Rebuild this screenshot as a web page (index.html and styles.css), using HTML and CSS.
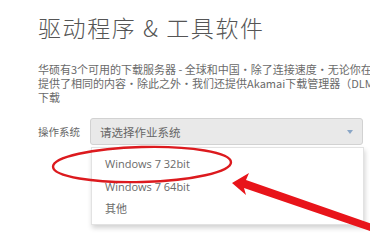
FILE: index.html
```html
<!DOCTYPE html>
<html lang="zh">
<head>
<meta charset="utf-8">
<link rel="stylesheet" href="styles.css">
</head>
<body>
<div class="page">
  <h1 class="title">驱动程序 &amp; 工具软件</h1>
  <div class="intro">
    <div class="line">华硕有3个可用的下载服务器 - 全球和中国・除了连接速度・无论你在哪个服务器下载・都</div>
    <div class="line">提供了相同的内容・除此之外・我们还提供Akamai下载管理器（DLM）以提高下载速度</div>
    <div class="line">下载</div>
  </div>
  <div class="row">
    <span class="label">操作系统</span>
    <div class="select">
      <span class="select-text">请选择作业系统</span>
      <span class="caret"></span>
    </div>
  </div>
</div>
<ul class="menu">
  <li class="item">Windows 7 32bit</li>
  <li class="item">Windows 7 64bit</li>
  <li class="item">其他</li>
</ul>
<svg class="annot" width="370" height="237" viewBox="0 0 370 237">
  <ellipse cx="142" cy="164.5" rx="89" ry="17.5" transform="rotate(-1.5 142 164.5)" fill="none" stroke="#dc1a1e" stroke-width="2.4"/>
  <polygon points="232,183 249,173 246,180 372,224 370,231 244,188 246,195" fill="#e8141a"/>
</svg>
</body>
</html>
```
FILE: styles.css
```css
html, body {
  margin: 0;
  padding: 0;
  background: #ffffff;
  width: 370px;
  height: 237px;
  overflow: hidden;
}
body {
  position: relative;
  font-family: "Open Sans", "Noto Sans CJK SC", sans-serif;
}
.page {
  padding: 11px 0 0 38px;
}
.title {
  margin: 0;
  font-family: "Noto Sans CJK SC", sans-serif;
  font-weight: 300;
  font-size: 23px;
  line-height: 32px;
  letter-spacing: 1.6px;
  color: #555555;
  white-space: nowrap;
}
.intro {
  margin-top: 19px;
  font-family: "Noto Sans CJK SC", sans-serif;
  font-size: 11px;
  line-height: 14px;
  color: #6a6a6a;
  width: 600px;
}
.line {
  white-space: nowrap;
}
.row {
  margin-top: 14px;
  display: flex;
  align-items: center;
}
.label {
  width: 52px;
  font-family: "Noto Sans CJK SC", sans-serif;
  font-size: 10.5px;
  color: #666666;
}
.select {
  box-sizing: border-box;
  width: 273px;
  height: 27px;
  background: #e9e9e9;
  border: 1px solid #d2d2d2;
  border-radius: 3px;
  display: flex;
  align-items: center;
  justify-content: space-between;
  padding: 0 9px;
}
.select-text {
  font-family: "Noto Sans CJK SC", sans-serif;
  font-size: 11.5px;
  color: #666666;
}
.caret {
  width: 0;
  height: 0;
  border-left: 3px solid transparent;
  border-right: 3px solid transparent;
  border-top: 4px solid #8aa6c6;
}
.menu {
  position: absolute;
  left: 91px;
  top: 147px;
  width: 273px;
  box-sizing: border-box;
  margin: 0;
  padding: 5px 0 3.5px 0;
  list-style: none;
  background: #ffffff;
  border: 1px solid #e2e2e2;
  box-shadow: 1px 3px 5px rgba(0, 0, 0, 0.18);
}
.item {
  height: 22.5px;
  line-height: 22.5px;
  padding-left: 13px;
  font-size: 11px;
  color: #6a6a6a;
}
.annot {
  position: absolute;
  left: 0;
  top: 0;
}
```
